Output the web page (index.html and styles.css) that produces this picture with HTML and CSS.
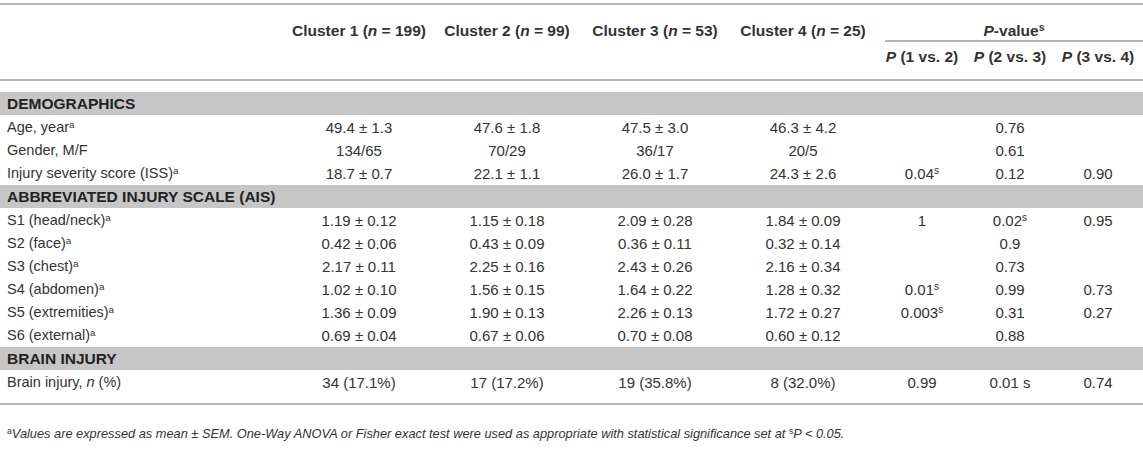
FILE: index.html
```html
<!DOCTYPE html>
<html lang="en">
<head>
    <meta charset="UTF-8">
    <meta name="viewport" content="width=device-width, initial-scale=1.0">
    <title>Clusters - Table</title>
    <link rel="stylesheet" href="styles.css">
</head>
<body>
    <main class="page">
        <table class="data-table">
            <colgroup>
                <col class="col-label">
                <col class="col-cluster">
                <col class="col-cluster">
                <col class="col-cluster">
                <col class="col-cluster">
                <col class="col-p1">
                <col class="col-p2">
                <col class="col-p3">
            </colgroup>
            <thead>
                <tr class="head-top">
                    <th rowspan="2" class="head-span"></th>
                    <th rowspan="2" class="head-span">Cluster 1 (<i>n</i> = 199)</th>
                    <th rowspan="2" class="head-span">Cluster 2 (<i>n</i> = 99)</th>
                    <th rowspan="2" class="head-span">Cluster 3 (<i>n</i> = 53)</th>
                    <th rowspan="2" class="head-span">Cluster 4 (<i>n</i> = 25)</th>
                    <th colspan="3" class="head-pvalue">
                        <div class="pvalue-title"><i>P</i>-value<sup>s</sup></div>
                    </th>
                </tr>
                <tr class="head-sub">
                    <th><i>P</i> (1 vs. 2)</th>
                    <th><i>P</i> (2 vs. 3)</th>
                    <th><i>P</i> (3 vs. 4)</th>
                </tr>
            </thead>
            <tbody>
                <tr class="spacer"><td colspan="8"></td></tr>
                <tr class="section"><td colspan="8">DEMOGRAPHICS</td></tr>
                <tr>
                    <td>Age, year<sup>a</sup></td>
                    <td>49.4 ± 1.3</td>
                    <td>47.6 ± 1.8</td>
                    <td>47.5 ± 3.0</td>
                    <td>46.3 ± 4.2</td>
                    <td></td><td>0.76</td><td></td>
                </tr>
                <tr>
                    <td>Gender, M/F</td>
                    <td>134/65</td>
                    <td>70/29</td>
                    <td>36/17</td>
                    <td>20/5</td>
                    <td></td><td>0.61</td><td></td>
                </tr>
                <tr>
                    <td>Injury severity score (ISS)<sup>a</sup></td>
                    <td>18.7 ± 0.7</td>
                    <td>22.1 ± 1.1</td>
                    <td>26.0 ± 1.7</td>
                    <td>24.3 ± 2.6</td>
                    <td>0.04<sup>s</sup></td><td>0.12</td><td>0.90</td>
                </tr>
                <tr class="section"><td colspan="8">ABBREVIATED INJURY SCALE (AIS)</td></tr>
                <tr>
                    <td>S1 (head/neck)<sup>a</sup></td>
                    <td>1.19 ± 0.12</td>
                    <td>1.15 ± 0.18</td>
                    <td>2.09 ± 0.28</td>
                    <td>1.84 ± 0.09</td>
                    <td>1</td><td>0.02<sup>s</sup></td><td>0.95</td>
                </tr>
                <tr>
                    <td>S2 (face)<sup>a</sup></td>
                    <td>0.42 ± 0.06</td>
                    <td>0.43 ± 0.09</td>
                    <td>0.36 ± 0.11</td>
                    <td>0.32 ± 0.14</td>
                    <td></td><td>0.9</td><td></td>
                </tr>
                <tr>
                    <td>S3 (chest)<sup>a</sup></td>
                    <td>2.17 ± 0.11</td>
                    <td>2.25 ± 0.16</td>
                    <td>2.43 ± 0.26</td>
                    <td>2.16 ± 0.34</td>
                    <td></td><td>0.73</td><td></td>
                </tr>
                <tr>
                    <td>S4 (abdomen)<sup>a</sup></td>
                    <td>1.02 ± 0.10</td>
                    <td>1.56 ± 0.15</td>
                    <td>1.64 ± 0.22</td>
                    <td>1.28 ± 0.32</td>
                    <td>0.01<sup>s</sup></td><td>0.99</td><td>0.73</td>
                </tr>
                <tr>
                    <td>S5 (extremities)<sup>a</sup></td>
                    <td>1.36 ± 0.09</td>
                    <td>1.90 ± 0.13</td>
                    <td>2.26 ± 0.13</td>
                    <td>1.72 ± 0.27</td>
                    <td>0.003<sup>s</sup></td><td>0.31</td><td>0.27</td>
                </tr>
                <tr>
                    <td>S6 (external)<sup>a</sup></td>
                    <td>0.69 ± 0.04</td>
                    <td>0.67 ± 0.06</td>
                    <td>0.70 ± 0.08</td>
                    <td>0.60 ± 0.12</td>
                    <td></td><td>0.88</td><td></td>
                </tr>
                <tr class="section"><td colspan="8">BRAIN INJURY</td></tr>
                <tr class="last-row">
                    <td>Brain injury, <i>n</i> (%)</td>
                    <td>34 (17.1%)</td>
                    <td>17 (17.2%)</td>
                    <td>19 (35.8%)</td>
                    <td>8 (32.0%)</td>
                    <td>0.99</td><td>0.01 s</td><td>0.74</td>
                </tr>
            </tbody>
        </table>

        <p class="footnote"><sup>a</sup>Values are expressed as mean ± SEM. One-Way ANOVA or Fisher exact test were used as appropriate with statistical significance set at <sup>s</sup>P &lt; 0.05.</p>
    </main>
</body>
</html>
```

FILE: styles.css
```css
* {
    box-sizing: border-box;
    margin: 0;
    padding: 0;
}

body {
    font-family: "Liberation Sans", Arial, sans-serif;
    color: #333;
    background-color: #fff;
}

.page {
    padding-top: 3px;
}

.data-table {
    width: 1143px;
    table-layout: fixed;
    border-collapse: separate;
    border-spacing: 0;
    font-size: 15px;
}

.col-label { width: 285px; }
.col-cluster { width: 148px; }
.col-p1 { width: 90px; }
.col-p2 { width: 86px; }
.col-p3 { width: 90px; }

.data-table th {
    font-size: 15.5px;
    font-weight: bold;
    line-height: 17px;
    text-align: center;
    white-space: nowrap;
}

.head-top th {
    border-top: 2px solid #b4b4b4;
}

.head-span {
    vertical-align: top;
    padding-top: 17px;
    border-bottom: 2px solid #b4b4b4;
}

.head-pvalue {
    padding-top: 17px;
    vertical-align: top;
}

.pvalue-title {
    margin-left: 8px;
    padding-bottom: 1px;
    border-bottom: 2px solid #b4b4b4;
}

.head-sub th {
    padding: 6px 0 14px;
    border-bottom: 2px solid #b4b4b4;
}

sup {
    font-size: 0.68em;
    line-height: 0;
    vertical-align: 0.45em;
    font-style: normal;
}

.data-table td {
    height: 23px;
    line-height: 17px;
    text-align: center;
    white-space: nowrap;
}

.data-table td:first-child {
    font-size: 14.5px;
    text-align: left;
    padding-left: 7px;
}

.spacer td {
    height: 11px;
}

.section td,
.data-table .section td:first-child {
    height: 24px;
    background-color: #c6c6c6;
    font-size: 15.5px;
    font-weight: bold;
    color: #222;
    border-bottom: 1px solid #fff;
}

.last-row td {
    height: 34px;
    padding-bottom: 10px;
    border-bottom: 2px solid #b4b4b4;
}

.footnote {
    padding: 20px 0 0 7px;
    font-size: 12.8px;
    font-style: italic;
    line-height: 17px;
}
```
